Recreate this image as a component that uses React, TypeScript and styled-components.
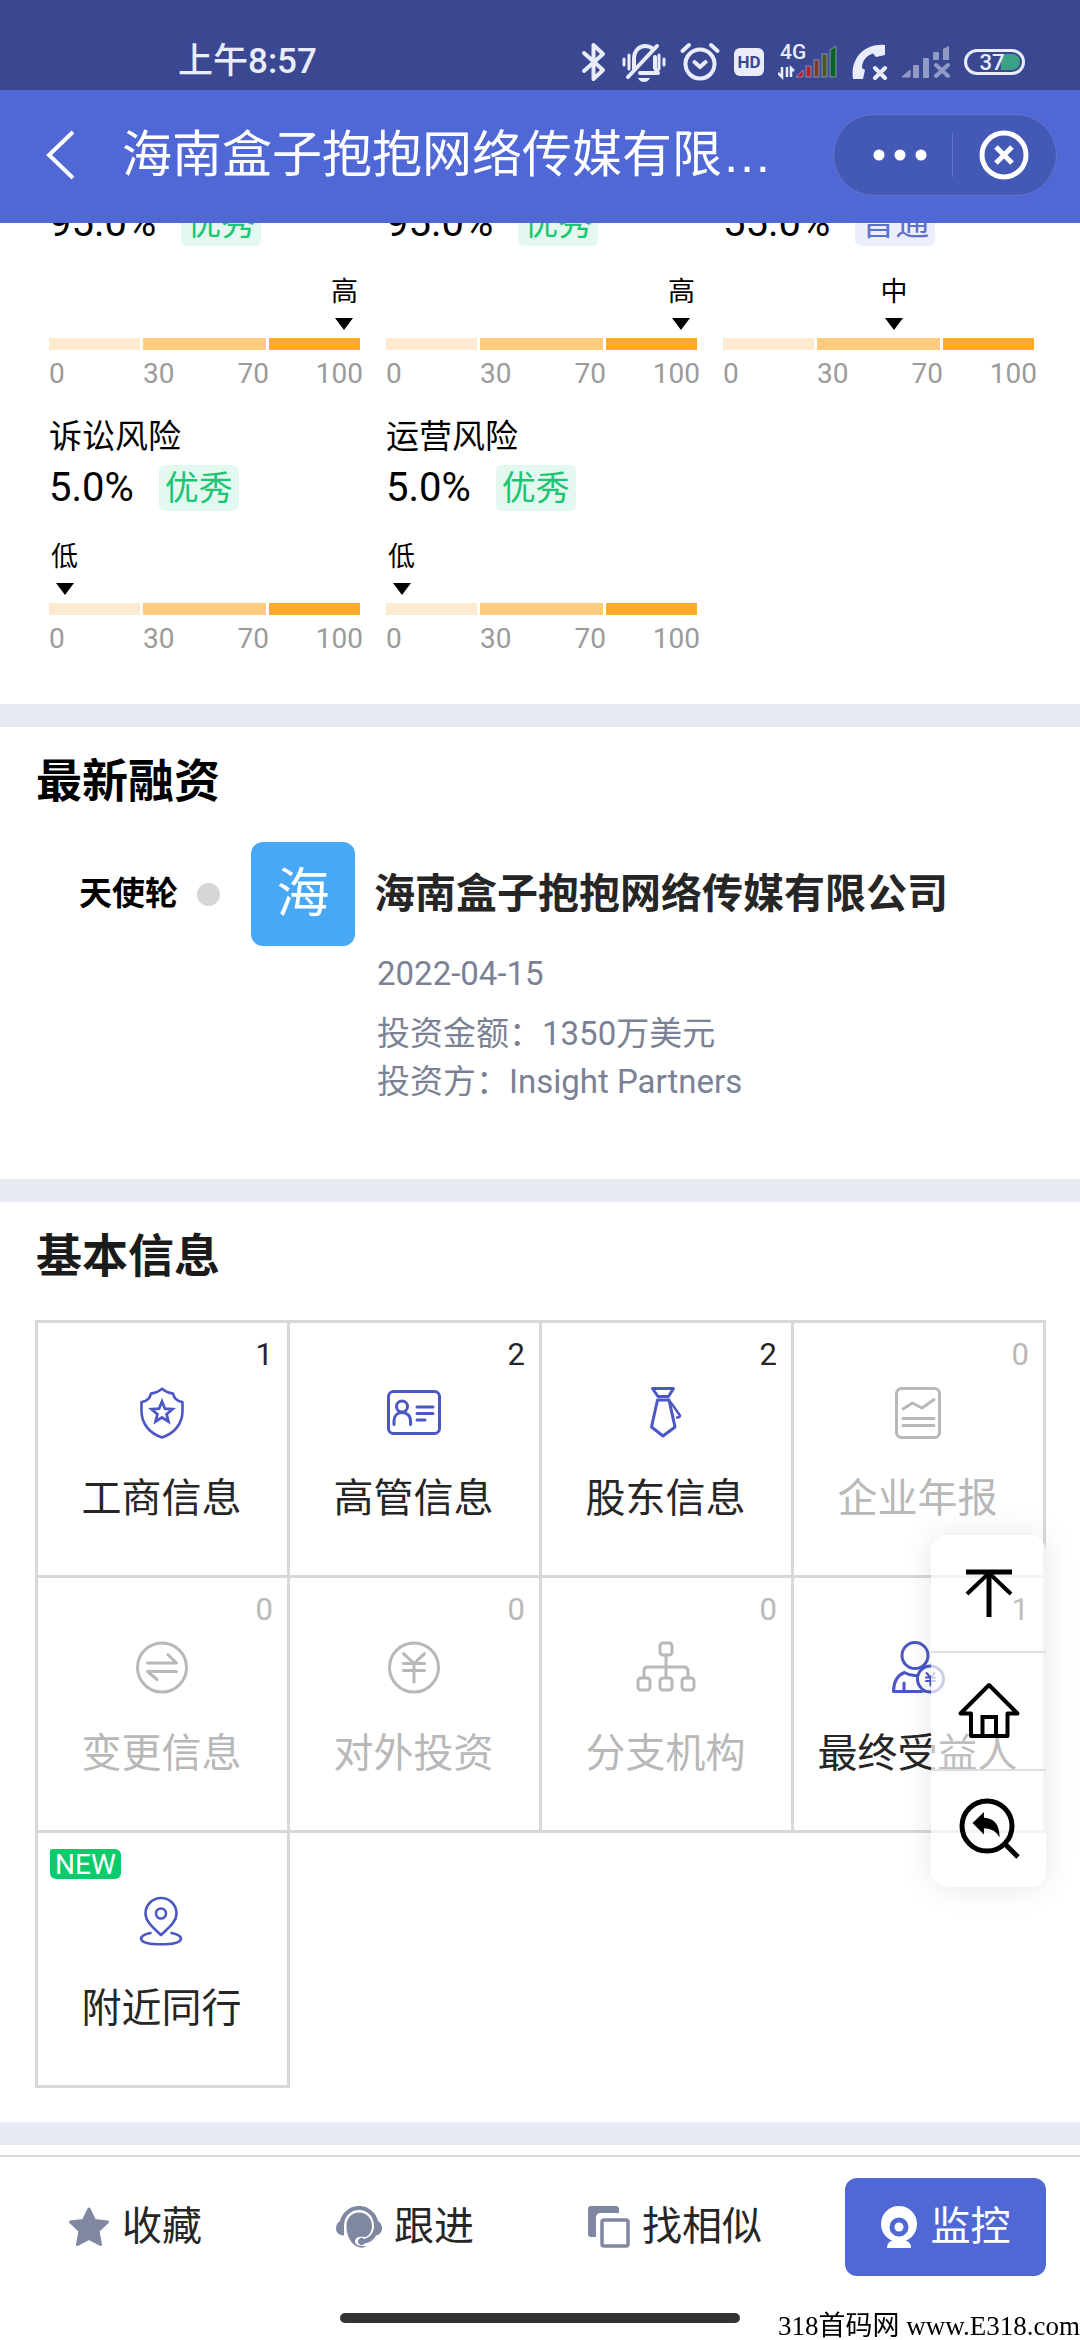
import React from "react";
import styled, { createGlobalStyle, css } from "styled-components";

const colors = {
  status: "#3a4892",
  brand: "#5068d6",
  icon: "#4a57c4",
  muted: "#b8b8b8",
  ink: "#262626",
  line: "#d8d8d8",
  divider: "#e7eaf3",
  slate: "#7b8194",
  good: "#1cc573",
};

const GlobalStyle = createGlobalStyle`
  *, *::before, *::after { box-sizing: border-box; }
  body {
    margin: 0;
    background: #fff;
    color: #000;
    font-family: Roboto, "Noto Sans CJK SC", sans-serif;
  }
  h1, h2, h3, p, dl, dd, dt, ul { margin: 0; padding: 0; }
  ul { list-style: none; }
  button {
    margin: 0;
    padding: 0;
    border: 0;
    background: none;
    color: inherit;
    font: inherit;
    cursor: pointer;
  }
  svg { display: block; flex: none; }
`;

const Page = styled.div`
  display: flex;
  flex-direction: column;
  min-height: 100vh;
`;

/* ---------- header ---------- */

const Header = styled.header`
  position: sticky;
  top: 0;
  z-index: 2;
  color: #fff;
`;

const StatusBar = styled.div`
  display: flex;
  align-items: center;
  justify-content: space-between;
  height: 90px;
  padding: 34px 55px 0 178px;
  background: ${colors.status};
  color: #e9ecfb;
`;

const Clock = styled.time`
  font-size: 35px;
  font-weight: 500;
  line-height: 40px;
`;

const StatusIcons = styled.div`
  display: flex;
  align-items: center;
  gap: 14px;
`;

const NavBar = styled.div`
  display: flex;
  align-items: center;
  height: 133px;
  padding: 0 23px 4px 40px;
  background: ${colors.brand};
`;

const BackButton = styled.button`
  padding: 0 6px;
`;

const NavTitle = styled.h1`
  flex: 1;
  min-width: 0;
  margin-left: 40px;
  font-family: "Liberation Sans", "Noto Sans CJK SC", sans-serif;
  font-size: 50px;
  font-weight: 400;
  line-height: 72px;
  white-space: nowrap;
`;

const Capsule = styled.div`
  display: flex;
  align-items: center;
  width: 224px;
  height: 82px;
  border: 1px solid #6375cb;
  border-radius: 41px;
  background: #4459b5;
`;

const CapsuleButton = styled.button`
  display: flex;
  flex: 1 1 0;
  align-items: center;
  justify-content: center;
  height: 44px;

  &:first-child {
    padding-left: 14px;
  }

  & + & {
    border-left: 1px solid #6375cb;
  }
`;

/* ---------- sections ---------- */

const Main = styled.main`
  flex: 1;
`;

const Section = styled.section`
  border-bottom: 23px solid ${colors.divider};
`;

const SectionTitle = styled.h2<{ $color: string }>`
  padding: 24px 36px 0;
  color: ${(p) => p.$color};
  font-size: 46px;
  font-weight: 700;
  line-height: 60px;
`;

/* The list is scrolled: its first row starts behind the header. */
const ScoreSection = styled(Section)`
  margin-top: -23px;
`;

const ScoreGrid = styled.div`
  display: grid;
  grid-template-columns: repeat(3, 1fr);
  gap: 24px 26px;
  padding: 0 46px 48px 49px;
`;

const ScoreName = styled.h3`
  height: 50px;
  font-size: 33px;
  font-weight: 400;
  line-height: 44px;
`;

const ScoreValue = styled.div`
  display: flex;
  align-items: center;
  gap: 25px;
  font-size: 40px;
  line-height: 46px;
`;

const Grade = styled.span<{ $normal?: boolean }>`
  padding: 0 6px;
  border-radius: 6px;
  background: ${(p) => (p.$normal ? "#ebeefb" : "#e3f9ef")};
  color: ${(p) => (p.$normal ? "#5f70cc" : colors.good)};
  font-size: 34px;
  line-height: 46px;
`;

const Marker = styled.div`
  display: flex;
  flex-direction: column;
  align-items: center;
  width: 28px;
  margin-top: 26px;
  font-size: 27px;
  line-height: 40px;

  &::after {
    content: "";
    margin: 6px 0 8px;
    border: solid transparent;
    border-width: 12px 9px 0;
    border-top-color: #000;
  }
`;

const Scale = styled.div`
  display: grid;
  grid-template-columns: 91fr 123fr 91fr;
  gap: 3px;
`;

const Segment = styled.div<{ $color: string }>`
  height: 12px;
  background: ${(p) => p.$color};
`;

const Ticks = styled.div`
  display: flex;
  justify-content: space-between;
  margin-right: -3px;
  padding-top: 4px;
  color: #9b9b9b;
  font-size: 28px;
  line-height: 34px;

  &:last-child {
    justify-content: flex-end;
  }
`;

/* ---------- financing ---------- */

const Round = styled.div`
  display: grid;
  grid-template-columns: 178px 23px 104px 1fr;
  align-items: center;
  column-gap: 19px;
  padding: 31px 34px 73px 0;
`;

const RoundName = styled.p`
  font-size: 33px;
  font-weight: 700;
  line-height: 44px;
  text-align: right;
`;

const RoundDot = styled.span`
  width: 23px;
  height: 23px;
  border-radius: 50%;
  background: #d6d6d6;
`;

const Avatar = styled.div`
  display: flex;
  align-items: center;
  justify-content: center;
  height: 104px;
  margin: 0 -12px 0 12px;
  border-radius: 12px;
  background: #47a8f5;
  color: #fff;
  font-size: 53px;
  line-height: 80px;
`;

const Company = styled.h3`
  margin-left: 12px;
  color: ${colors.ink};
  font-size: 41px;
  font-weight: 700;
  line-height: 56px;
`;

const Details = styled.dl`
  grid-column: 4;
  margin-left: 15px;
  padding-top: 4px;
  color: ${colors.slate};
  font-size: 33px;
  line-height: 48px;
`;

const DetailRow = styled.div<{ $spaced?: boolean }>`
  display: flex;
  margin-bottom: ${(p) => (p.$spaced ? 12 : 0)}px;
`;

/* ---------- basic information ---------- */

const InfoGrid = styled.ul`
  display: grid;
  grid-template-columns: repeat(4, 1fr);
  margin: 34px 34px 34px 35px;
  border: solid ${colors.line};
  border-width: 3px 0 0 3px;
`;

const InfoCell = styled.li`
  border: solid ${colors.line};
  border-width: 0 3px 3px 0;
`;

const InfoButton = styled.button<{ $empty?: boolean }>`
  display: flex;
  flex-direction: column;
  align-items: center;
  width: 100%;
  height: 252px;
  padding: 14px 14px 0 12px;
  color: ${(p) => (p.$empty ? colors.muted : colors.ink)};
  font-size: 40px;
  line-height: 48px;

  svg {
    margin: 13px 0 35px;
    color: ${(p) => (p.$empty ? colors.muted : colors.icon)};
  }
`;

const Count = styled.span`
  align-self: flex-end;
  height: 36px;
  font-size: 31px;
  line-height: 36px;
`;

const NewTag = styled.span`
  align-self: flex-start;
  height: 30px;
  margin: 2px 0 4px;
  padding: 0 5px;
  border-radius: 2px 6px 6px 6px;
  background: #0acb6b;
  color: #fff;
  font-size: 28px;
  line-height: 31px;
`;

/* ---------- floating tools and footer ---------- */

const Tools = styled.nav`
  position: fixed;
  right: 34px;
  bottom: 453px;
  z-index: 1;
  width: 115px;
  border-radius: 16px;
  background: rgba(255, 255, 255, 0.7);
  box-shadow: 0 0 32px rgba(0, 0, 0, 0.1);
`;

const ToolButton = styled.button`
  display: flex;
  align-items: center;
  justify-content: center;
  width: 100%;
  height: 116px;
  color: #000;

  & + & {
    height: 118px;
    border-top: 2px solid #dedede;
  }
`;

const Footer = styled.footer`
  position: sticky;
  bottom: 0;
  padding: 21px 0 17px;
  border-top: 2px solid #dadada;
  background: #fff;
`;

const Action = styled.button<{ $primary?: boolean }>`
  display: flex;
  align-items: center;
  justify-content: center;
  gap: 12px;
  color: ${colors.ink};
  font-size: 40px;
  line-height: 56px;

  svg {
    color: #8087a0;
  }

  ${(p) =>
    p.$primary &&
    css`
      gap: 14px;
      margin-left: 35px;
      border-radius: 12px;
      background: ${colors.brand};
      color: #fff;

      svg {
        color: #fff;
      }
    `}
`;

const Actions = styled.div`
  display: grid;
  grid-template-columns: repeat(3, 1fr) 236px;
  height: 98px;
  padding-right: 34px;
`;

const HomeIndicator = styled.div`
  width: 37%;
  height: 10px;
  margin: 37px auto 0;
  border-radius: 5px;
  background: #333;
`;

const Watermark = styled.p`
  position: absolute;
  right: 0;
  bottom: 0;
  font-family: "Liberation Serif", "Noto Sans CJK SC", serif;
  font-size: 27px;
  line-height: 28px;
  white-space: nowrap;
`;

/* ---------- icons ---------- */

type IconProps = { children: React.ReactNode; w?: number; h?: number; stroke?: number };

const Line = ({ children, w = 54, h = 54, stroke = 3 }: IconProps) => (
  <svg
    width={w}
    height={h}
    viewBox={`0 0 ${w} ${h}`}
    fill="none"
    stroke="currentColor"
    strokeWidth={stroke}
    strokeLinecap="round"
    strokeLinejoin="round"
    aria-hidden="true"
  >
    {children}
  </svg>
);

const Solid = ({ children, w = 42, h = 42 }: IconProps) => (
  <svg width={w} height={h} viewBox={`0 0 ${w} ${h}`} fill="currentColor" aria-hidden="true">
    {children}
  </svg>
);

const icons = {
  shield: (
    <Line stroke={2.6}>
      <path d="M27 2.8C30 5.5 34 7 38 7.6C39 12.5 42.5 15.500 47.500 16V25C47.500 38 39 47.500 27 51.500C15 47.500 6.500 38 6.500 25V16C11.500 15.500 15 12.500 16 7.600C20 7 24 5.500 27 2.800Z" />
      <path
        strokeWidth="2.8"
        strokeLinejoin="miter"
        d="M27 15.500L29.900 22.700L37.400 23.200L31.600 28.200L33.400 35.500L27 31.500L20.600 35.500L22.400 28.200L16.600 23.200L24.100 22.700Z"
      />
    </Line>
  ),
  card: (
    <Line>
      <rect x="1.500" y="5.500" width="51" height="42" rx="5" />
      <circle cx="15" cy="20.500" r="5.500" />
      <path d="M7 38.500V35C7 29.500 10.500 26.500 15 26.500S23.500 29.500 23.500 35V38.500M30 21H46M30 27.500H46M30 34H38" />
    </Line>
  ),
  tie: (
    <Line>
      <path d="M13.500 2.500H34.500L29.500 10.500H19Z" />
      <path d="M18.500 14H30L36 41L24 50L12.500 41Z" />
      <path strokeWidth="2.4" d="M31.500 16L41 29.500Q41 31.500 38 31.500" />
    </Line>
  ),
  report: (
    <Line>
      <rect x="5.500" y="2.500" width="43" height="49" rx="5" />
      <path d="M12 23L21.500 17L31 22L43 13.500M12 32.500H43M12 39.500H43" />
    </Line>
  ),
  change: (
    <Line>
      <circle cx="27" cy="26.500" r="24.500" />
      <path d="M12.500 22H41.500L33 13.700M41.500 30.500H12.500L22 38.500" />
    </Line>
  ),
  invest: (
    <Line>
      <circle cx="27" cy="26.500" r="24.500" />
      <path d="M16.500 12.700L27 22.500L37.500 12.700M27 22.500V41M16.500 22.500H37.500M16.500 29.500H37.500" />
    </Line>
  ),
  branch: (
    <Line w={60}>
      <rect x="24" y="2" width="12" height="12" rx="3" />
      <path d="M30 14V36M8 36V30Q8 26 12 26H48Q52 26 52 30V36" />
      <rect x="2" y="37" width="12" height="12" rx="3" />
      <rect x="24" y="37" width="12" height="12" rx="3" />
      <rect x="46" y="37" width="12" height="12" rx="3" />
    </Line>
  ),
  owner: (
    <Line>
      <circle cx="24" cy="14.500" r="13" />
      <path d="M30 50.500H2.500C2.500 40.500 6 34.500 13.500 31.500Q19 35 25 34.500M13 42V50" />
      <circle cx="39.500" cy="38" r="13" />
      <path
        strokeWidth="2"
        d="M35.500 32L39.500 36.500L43.500 32M39.500 36.500V44.500M35 36.500H44M35 40H44M30 50.500H40"
      />
    </Line>
  ),
  pin: (
    <Line stroke={2.6}>
      <path d="M26 39C20 33 10.500 26.500 10.500 17.500A15.500 15.500 0 0 1 41.500 17.500C41.500 26.500 32 33 26 39Z" />
      <circle cx="26" cy="17.500" r="5" />
      <path d="M15.500 37C2 39.500 1 48.300 26 48.300S50 39.500 36.500 37" />
    </Line>
  ),
};

const BluetoothIcon = () => (
  <Line w={25} h={40} stroke={4}>
    <path d="M3 11L22 28L12.500 37V3L22 12L3 29" />
  </Line>
);

const MutedBellIcon = () => (
  <Line w={46} h={40} stroke={4}>
    <path d="M14 27V17C14 8 20 4 25 4C28 4 31 5 33 7M8 35L37 4M35 15V26L38 31H20" />
    <path strokeWidth="3" d="M4 17V23M9 13V27M39 13V27M44 17V23" />
    <path fill="currentColor" stroke="none" d="M18 36H30Q28 40 24 40T18 36Z" />
  </Line>
);

const AlarmIcon = () => (
  <Line w={40} h={40} stroke={4}>
    <circle cx="20" cy="22" r="14.500" />
    <path d="M14.500 20L20 25L25.500 20M2.500 9L9 3M37.500 9L31 3" />
  </Line>
);

const HdIcon = () => (
  <svg width="30" height="28" viewBox="0 0 30 28" aria-label="HD">
    <rect width="30" height="28" rx="6" fill="#e9ecfb" />
    <text x="15" y="20" textAnchor="middle" fontSize="17" fontWeight="700" fill={colors.status}>
      HD
    </text>
  </svg>
);

const MobileSignalIcon = () => (
  <svg width="60" height="46" viewBox="0 0 60 46" aria-label="4G">
    <text x="2" y="20" fontSize="21" fontWeight="500" fill="#e9ecfb">
      4G
    </text>
    <path d="M4 28V38L0 34M9 38V28M13 38V29L16 32" stroke="#e9ecfb" strokeWidth="2.500" fill="none" />
    <g stroke="#8a90b4" strokeWidth="1">
      <path d="M18 38L25 31V38Z" fill="#c8102e" />
      <rect x="28" y="27" width="5" height="11" fill="#b5202b" />
      <rect x="36" y="21" width="5" height="17" fill="#7a3a26" />
      <rect x="44" y="15" width="5" height="23" fill="#4a5a1e" />
      <path d="M52 11L58 7V38H52Z" fill="#0a6424" />
    </g>
  </svg>
);

const CallFailedIcon = () => (
  <Solid w={36} h={36}>
    <path d="M33 1V11L24 13L21 9.500C14 12 10 17 10 24L13 26L11 35H1C-2 15 12-1 33 1Z" />
    <path d="M23 24L33 34M33 24L23 34" stroke="currentColor" strokeWidth="4" strokeLinecap="round" />
  </Solid>
);

const NoSignalIcon = () => (
  <Solid w={48} h={34}>
    <g opacity="0.5">
      <path d="M0 32L8 25V32Z" stroke="currentColor" strokeLinejoin="round" />
      <rect x="11" y="20" width="6" height="13" rx="1" />
      <rect x="21" y="13" width="6" height="20" rx="1" />
      <rect x="31" y="7" width="6" height="8" rx="1" />
      <path d="M41 4L47 1V15H41Z" />
      <path d="M34 20L46 31M46 20L34 31" stroke="currentColor" strokeWidth="4" strokeLinecap="round" />
    </g>
  </Solid>
);

const BatteryIcon = () => (
  <svg width="61" height="28" viewBox="0 0 61 28" aria-label="37%">
    <rect x="1.500" y="2.500" width="58" height="23" rx="11.500" fill="none" stroke="#e9ecfb" strokeWidth="3" />
    <path d="M37 6H48A8 8 0 0 1 48 22H37Z" fill="#3aa184" />
    <text x="28" y="22" textAnchor="middle" fontSize="22" fontWeight="500" fill="#e9ecfb">
      37
    </text>
  </svg>
);

/* ---------- data ---------- */

type Score = { name?: string; value: number; level: string };

const scores: Score[] = [
  { value: 95, level: "高" },
  { value: 95, level: "高" },
  { value: 55, level: "中" },
  { name: "诉讼风险", value: 5, level: "低" },
  { name: "运营风险", value: 5, level: "低" },
];

const infoItems: { label: string; icon: keyof typeof icons; count?: number }[] = [
  { label: "工商信息", icon: "shield", count: 1 },
  { label: "高管信息", icon: "card", count: 2 },
  { label: "股东信息", icon: "tie", count: 2 },
  { label: "企业年报", icon: "report", count: 0 },
  { label: "变更信息", icon: "change", count: 0 },
  { label: "对外投资", icon: "invest", count: 0 },
  { label: "分支机构", icon: "branch", count: 0 },
  { label: "最终受益人", icon: "owner", count: 1 },
  { label: "附近同行", icon: "pin" },
];

const ScoreItem = ({ name, value, level }: Score) => (
  <article>
    {name && <ScoreName>{name}</ScoreName>}
    <ScoreValue>
      {value.toFixed(1)}%<Grade $normal={level === "中"}>{level === "中" ? "普通" : "优秀"}</Grade>
    </ScoreValue>
    <Marker style={{ marginLeft: `calc(${value}% - 14px)` }}>{level}</Marker>
    <Scale>
      <Segment $color="#feeacf" />
      <Segment $color="#ffcb80" />
      <Segment $color="#ffaa2b" />
      <Ticks>0</Ticks>
      <Ticks>
        <span>30</span>
        <span>70</span>
      </Ticks>
      <Ticks>100</Ticks>
    </Scale>
  </article>
);

export default function App() {
  return (
    <Page>
      <GlobalStyle />
      <Header>
        <StatusBar>
          <Clock>上午8:57</Clock>
          <StatusIcons>
            <BluetoothIcon />
            <MutedBellIcon />
            <AlarmIcon />
            <HdIcon />
            <MobileSignalIcon />
            <CallFailedIcon />
            <NoSignalIcon />
            <BatteryIcon />
          </StatusIcons>
        </StatusBar>
        <NavBar>
          <BackButton aria-label="返回">
            <svg width="30" height="50" viewBox="0 0 30 50" fill="none" stroke="#fff" strokeWidth="4">
              <path d="M27 2L3 25L27 48" />
            </svg>
          </BackButton>
          <NavTitle>海南盒子抱抱网络传媒有限…</NavTitle>
          <Capsule>
            <CapsuleButton aria-label="更多">
              <Solid w={54} h={12}>
                <circle cx="6" cy="6" r="5.500" />
                <circle cx="27" cy="6" r="5.500" />
                <circle cx="48" cy="6" r="5.500" />
              </Solid>
            </CapsuleButton>
            <CapsuleButton aria-label="关闭">
              <Line w={50} h={50} stroke={5}>
                <circle cx="25" cy="25" r="22" />
                <path strokeLinecap="butt" d="M17 17L33 33M33 17L17 33" />
              </Line>
            </CapsuleButton>
          </Capsule>
        </NavBar>
      </Header>

      <Main>
        <ScoreSection>
          <ScoreGrid>
            {scores.map((score, i) => (
              <ScoreItem key={i} {...score} />
            ))}
          </ScoreGrid>
        </ScoreSection>

        <Section>
          <SectionTitle $color="#000">最新融资</SectionTitle>
          <Round>
            <RoundName>天使轮</RoundName>
            <RoundDot />
            <Avatar>海</Avatar>
            <Company>海南盒子抱抱网络传媒有限公司</Company>
            <Details>
              <DetailRow $spaced>
                <dd>2022-04-15</dd>
              </DetailRow>
              <DetailRow>
                <dt>投资金额：</dt>
                <dd>1350万美元</dd>
              </DetailRow>
              <DetailRow>
                <dt>投资方：</dt>
                <dd>Insight Partners</dd>
              </DetailRow>
            </Details>
          </Round>
        </Section>

        <Section>
          <SectionTitle $color="#1b1b1b">基本信息</SectionTitle>
          <InfoGrid>
            {infoItems.map(({ label, icon, count }) => (
              <InfoCell key={label}>
                <InfoButton $empty={count === 0}>
                  {count === undefined ? <NewTag>NEW</NewTag> : <Count>{count}</Count>}
                  {icons[icon]}
                  {label}
                </InfoButton>
              </InfoCell>
            ))}
          </InfoGrid>
        </Section>
      </Main>

      <Tools>
        <ToolButton aria-label="回到顶部">
          <svg width="64" height="64" viewBox="0 0 64 64" fill="none" stroke="currentColor" strokeWidth="5">
            <path d="M9 11H55M32 11V56" />
            <path strokeWidth="4" d="M10 33L32 12L54 33" />
          </svg>
        </ToolButton>
        <ToolButton aria-label="首页">
          <svg
            width="64"
            height="64"
            viewBox="0 0 64 64"
            fill="none"
            stroke="currentColor"
            strokeWidth="4"
            strokeLinejoin="round"
          >
            <path d="M32 6L60.500 34.500H50.500V57H14V34.500H3.500Z" />
            <path strokeLinejoin="miter" d="M25.500 57V38H39V57" />
          </svg>
        </ToolButton>
        <ToolButton aria-label="查看记录">
          <svg width="64" height="64" viewBox="0 0 64 64" fill="none" stroke="currentColor" strokeWidth="5">
            <circle cx="30" cy="29" r="25" />
            <path d="M48 47L61 60" />
            <path
              fill="currentColor"
              stroke="none"
              d="M15.500 26L27 15V20.700C37 21 43 28 42.500 40.500C39 34 34 31.500 27 31.500V37.500Z"
            />
          </svg>
        </ToolButton>
      </Tools>

      <Footer>
        <Actions>
          <Action>
            <Solid>
              <path
                stroke="currentColor"
                strokeWidth="3"
                strokeLinejoin="round"
                d="M21 3L26.500 14.500L39.500 16L30 25L32.500 38.500L21 32.500L9.500 38.500L12 25L2.500 16L15.500 14.500Z"
              />
            </Solid>
            收藏
          </Action>
          <Action>
            <svg width="46" height="42" viewBox="0 0 46 42" fill="currentColor" aria-hidden="true">
              <path d="M4 15A19.500 19.500 0 0 1 42 15C44.500 16.500 46 19 46 22.500S43.500 29 40 29.500C37.500 34.500 33 37 28.500 37.500A3.500 3.500 0 1 1 28 33C34 31.500 38 27 38 20C38 10 31 4 23 4S8 10 8 20V29.500C3 29.500 0 26.500 0 22.500C0 19 1.500 16.500 4 15Z" />
              <path d="M23 6.500C15.500 6.500 10.500 12 10.500 20C10.500 30 15 39.500 24 41.500C27 42 29 41 30 40C24 40.500 19 39 19 35.500C19 31 24 30 29.500 31C34 29 36 25 36 20C36 12 30.500 6.500 23 6.500Z" />
            </svg>
            跟进
          </Action>
          <Action>
            <Solid>
              <path d="M3 0H28Q31 0 31 3V7H13Q8 7 8 12V31H3Q0 31 0 28V3Q0 0 3 0Z" />
              <rect x="14" y="14" width="26" height="26" rx="2" fill="none" stroke="currentColor" strokeWidth="3.500" />
            </Solid>
            找相似
          </Action>
          <Action $primary>
            <Solid w={36} h={42}>
              <path
                fillRule="evenodd"
                d="M18 0A18 18 0 1 1 18 36A18 18 0 0 1 18 0ZM18 11.500A9.500 9.500 0 1 0 18 30.500A9.500 9.500 0 0 0 18 11.500Z"
              />
              <circle cx="18" cy="21" r="4.500" />
              <path d="M10 35H26Q30 37 30 42H6Q6 37 10 35Z" />
            </Solid>
            监控
          </Action>
        </Actions>
        <HomeIndicator />
        <Watermark>318首码网 www.E318.com</Watermark>
      </Footer>
    </Page>
  );
}
